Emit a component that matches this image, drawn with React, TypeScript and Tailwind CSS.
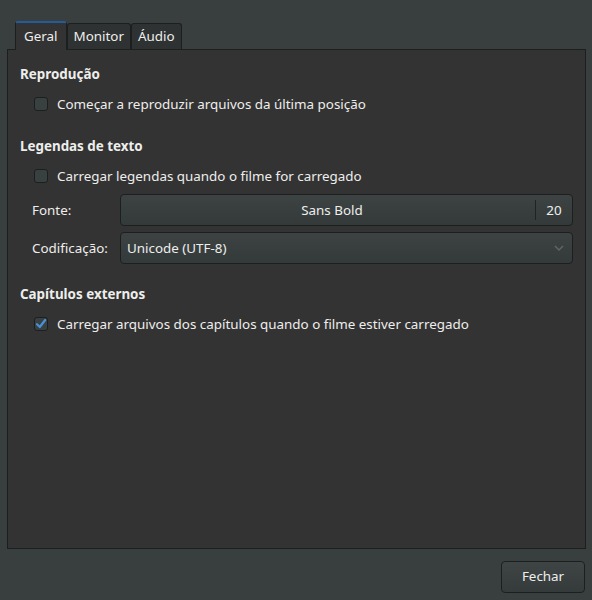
import React from 'react';

const font = { fontFamily: '"Noto Sans", "Open Sans", sans-serif' };

const Check: React.FC<{ checked?: boolean }> = ({ checked }) => (
  <span className="flex h-[14px] w-[14px] shrink-0 items-center justify-center rounded-[3px] border border-[#1c1f1f] bg-[#394040]">
    {checked && (
      <svg width="12" height="12" viewBox="0 0 12 12">
        <path d="M2 6.2 L4.8 9 L10.2 2" fill="none" stroke="#4a90d9" strokeWidth="2.2" strokeLinecap="round" strokeLinejoin="round" />
      </svg>
    )}
  </span>
);

const CheckRow: React.FC<{ label: string; checked?: boolean }> = ({ label, checked }) => (
  <div className="mt-[4px] flex h-[30px] items-center gap-[9px] pl-[26px]">
    <Check checked={checked} />
    <span>{label}</span>
  </div>
);

const Heading: React.FC<{ children: React.ReactNode }> = ({ children }) => (
  <div className="flex h-[22px] items-center pl-[12px] font-bold">{children}</div>
);

const tabs = ['Geral', 'Monitor', 'Áudio'];

export default function App() {
  return (
    <div style={font} className="flex h-[600px] w-[592px] flex-col bg-[#393f3f] text-[13.4px] text-[#eeeeec]">
      {/* abas */}
      <div className="flex h-[49px] items-end pl-[15px]">
        {tabs.map((t, i) =>
          i === 0 ? (
            <div
              key={t}
              className="relative z-10 mb-[-1px] flex h-[29px] items-center rounded-t-[3px] border-x border-t-2 border-x-[#1c1f1f] border-t-[#215d9c] bg-[#333333] px-[8px]"
            >
              {t}
            </div>
          ) : (
            <div
              key={t}
              className="flex h-[26px] items-center rounded-t-[3px] border-x border-t border-[#1c1f1f] bg-[#2e3232] px-[6px]"
            >
              {t}
            </div>
          )
        )}
      </div>

      {/* painel */}
      <div className="ml-[7px] mr-[6px] flex h-[500px] flex-col border border-[#1c1f1f] bg-[#333333] pt-[13px]">
        <Heading>Reprodução</Heading>
        <CheckRow label="Começar a reproduzir arquivos da última posição" />

        <div className="h-[16px]" />
        <Heading>Legendas de texto</Heading>
        <CheckRow label="Carregar legendas quando o filme for carregado" />

        <div className="mt-[3px] flex flex-col gap-[6px] pl-[24px] pr-[12px]">
          <div className="flex h-[32px] items-center">
            <span className="w-[88px]">Fonte:</span>
            <div className="flex h-full flex-1 items-center rounded-[4px] border border-[#1c1f1f] bg-gradient-to-b from-[#3d4343] to-[#343a3a]">
              <span className="flex-1 pl-[8px] text-center">Sans Bold</span>
              <span className="h-[20px] w-px bg-[#1f2323]" />
              <span className="w-[36px] text-center">20</span>
            </div>
          </div>
          <div className="flex h-[32px] items-center">
            <span className="w-[88px]">Codificação:</span>
            <div className="flex h-full flex-1 items-center justify-between rounded-[4px] border border-[#1c1f1f] bg-gradient-to-b from-[#3d4343] to-[#343a3a] pl-[6px] pr-[8px]">
              <span>Unicode (UTF-8)</span>
              <svg width="10" height="8" viewBox="0 0 10 8">
                <path d="M1 2 L5 6 L9 2" fill="none" stroke="#5e6565" strokeWidth="1.5" />
              </svg>
            </div>
          </div>
        </div>

        <div className="h-[19px]" />
        <Heading>Capítulos externos</Heading>
        <CheckRow label="Carregar arquivos dos capítulos quando o filme estiver carregado" checked />
      </div>

      {/* rodapé */}
      <div className="flex flex-1 items-center justify-end pr-[7px] pt-[4px]">
        <button className="h-[32px] w-[84px] rounded-[4px] border border-[#1c1f1f] bg-gradient-to-b from-[#3f4545] to-[#353b3b] text-[#eeeeec]">
          Fechar
        </button>
      </div>
    </div>
  );
}
